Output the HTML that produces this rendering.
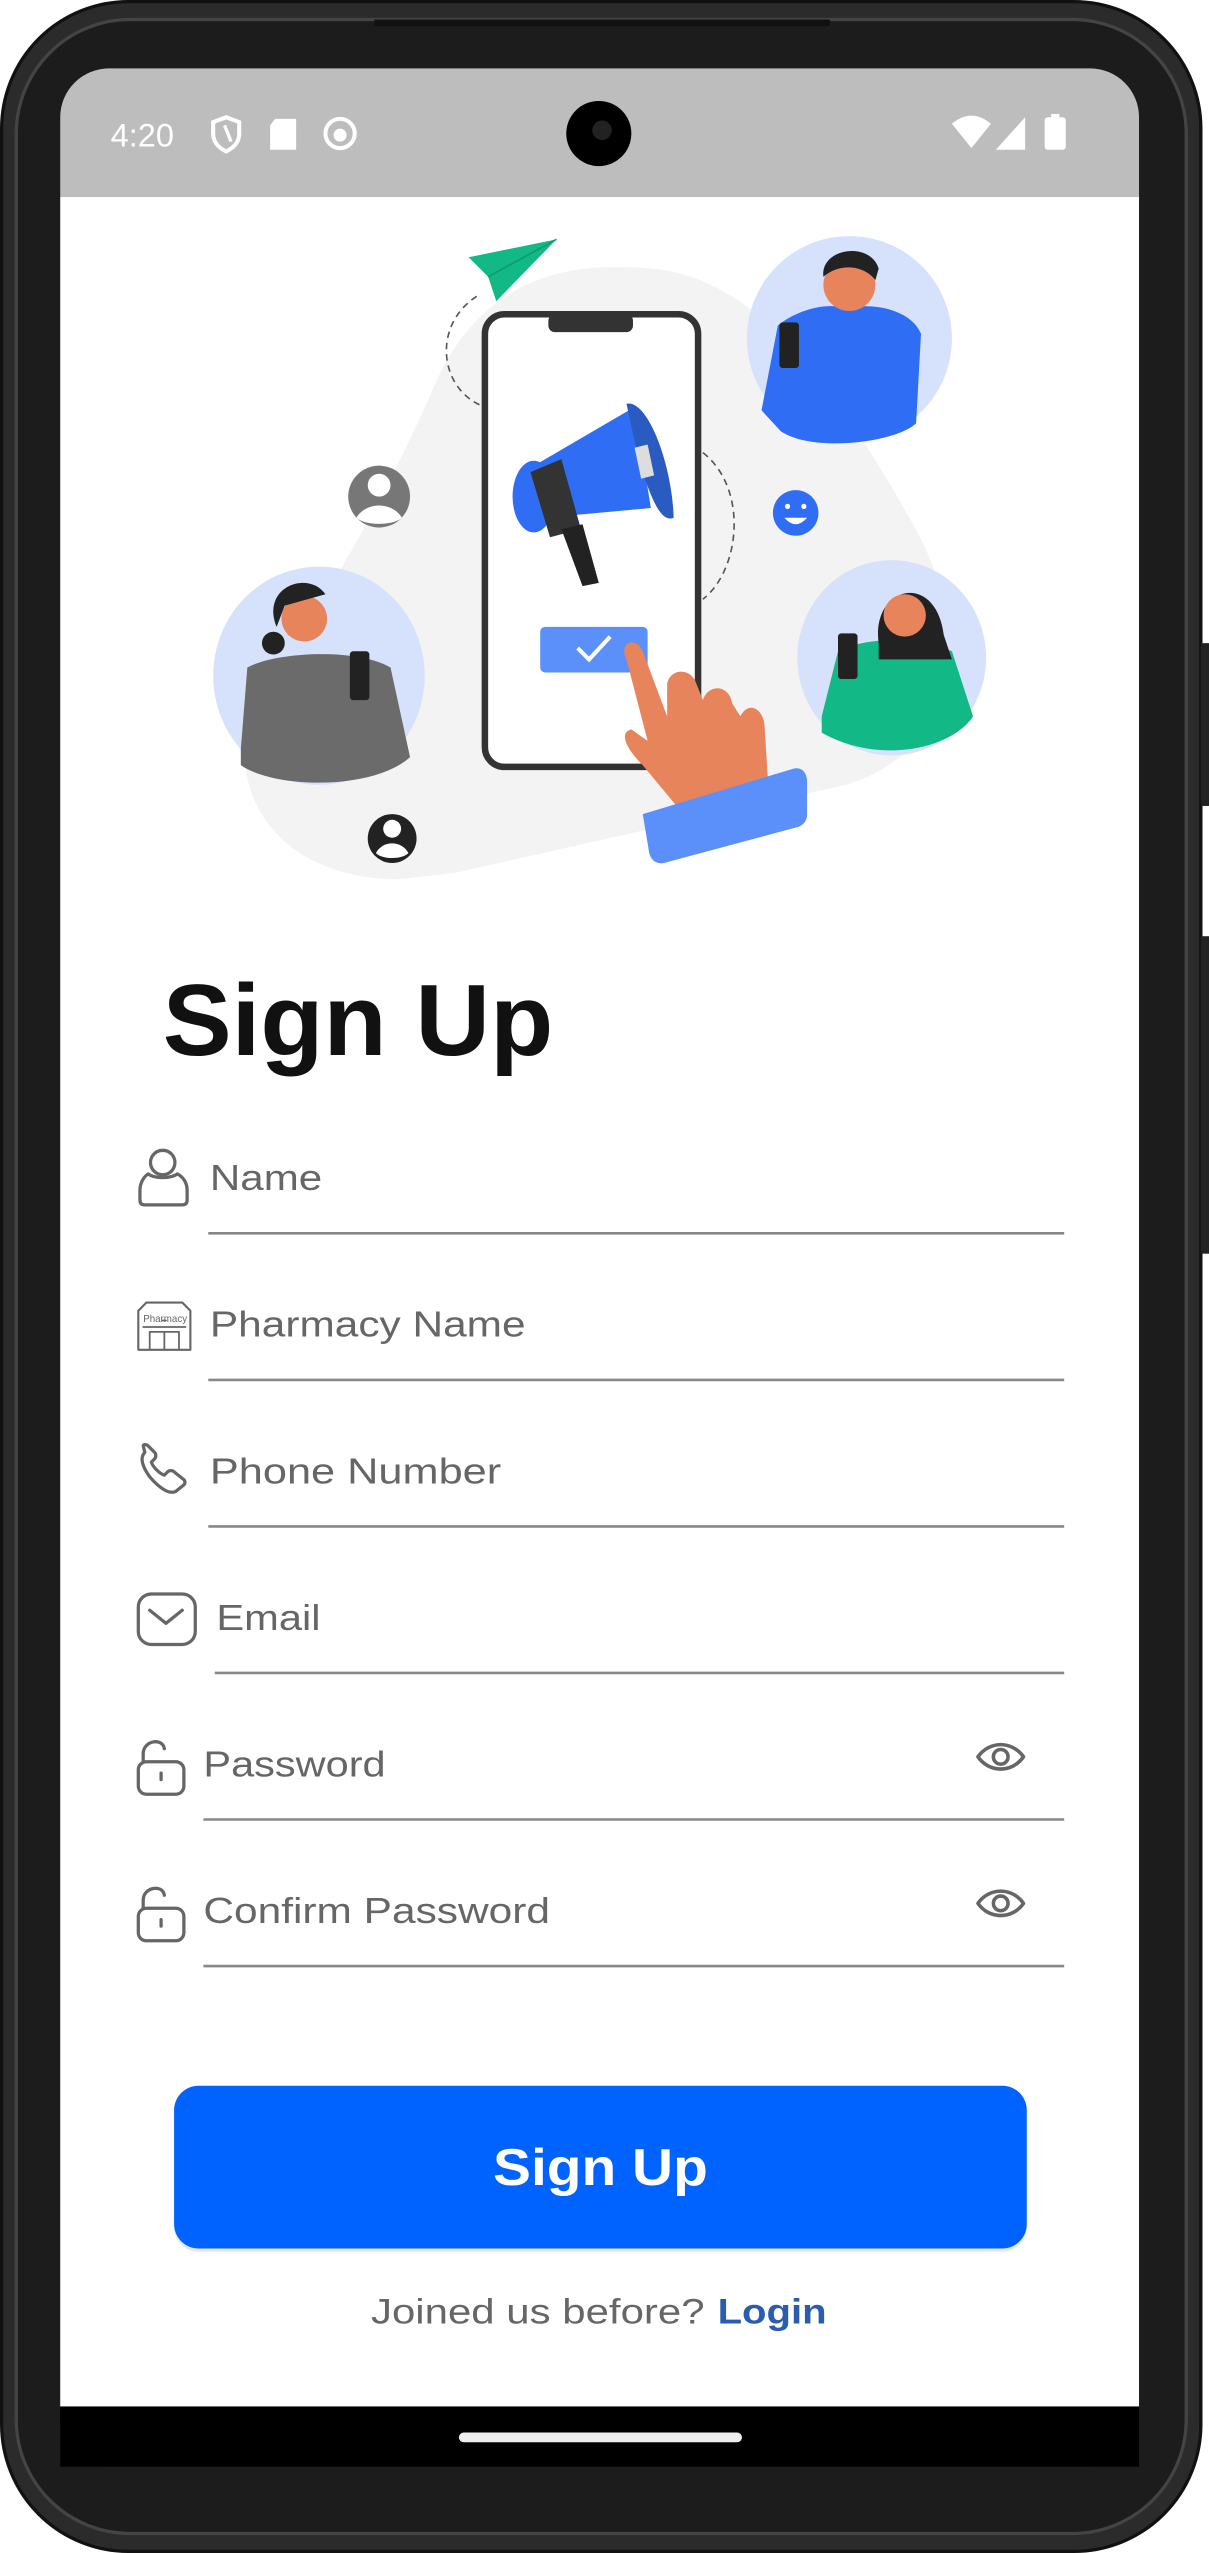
<!DOCTYPE html>
<html><head><meta charset="utf-8"><style>
html,body{margin:0;padding:0;background:#fff;width:1209px;height:2553px;overflow:hidden}
svg{display:block}
text{font-family:"Liberation Sans",sans-serif}
</style></head><body>
<svg width="1209" height="2553" viewBox="0 0 743 1568" preserveAspectRatio="none" xmlns="http://www.w3.org/2000/svg">
<rect x="0" y="0" width="743" height="1568" fill="#fff"/>
<!-- phone body -->
<rect x="1" y="1" width="737" height="1566" rx="78" fill="#2b2b2b" stroke="#111" stroke-width="2"/>
<rect x="10" y="12" width="719" height="1544" rx="70" fill="#1c1c1c" stroke="#444" stroke-width="2"/>
<rect x="738" y="395" width="5" height="100" fill="#222"/>
<rect x="738" y="575" width="5" height="195" fill="#222"/>
<rect x="230" y="12" width="280" height="4" fill="#111"/>
<!-- screen -->
<rect x="37" y="42" width="663" height="1473" rx="30" fill="#000"/>
<path d="M37,121 V72 A30,30 0 0 1 67,42 H670 A30,30 0 0 1 700,72 V121 Z" fill="#bdbdbd"/>
<rect x="37" y="121" width="663" height="1357" fill="#fff"/>
<rect x="37" y="1478" width="663" height="37" fill="#000"/>
<rect x="282" y="1494" width="174" height="6" rx="3" fill="#eee"/>
<!-- status bar -->
<text x="68" y="90" font-size="20" fill="#fff">4:20</text>
<path d="M131,75 L139,72 L147,75 V82 C147,88 143,91 139,93 C135,91 131,88 131,82 Z" fill="none" stroke="#fff" stroke-width="2.5"/>
<path d="M138,77 L142,87" stroke="#fff" stroke-width="2"/>
<path d="M169,73 H182 V92 H166 V77 Z" fill="#fff"/>
<circle cx="209" cy="82" r="9" fill="none" stroke="#fff" stroke-width="2.5"/>
<circle cx="209" cy="83" r="4" fill="#fff"/>
<circle cx="368" cy="82" r="20" fill="#000"/>
<circle cx="370" cy="80" r="6" fill="#222"/>
<path d="M585,76 Q597,66 609,76 L597,91 Z" fill="#fff"/>
<path d="M630,72 V92 H612 Z" fill="#fff"/>
<rect x="642" y="72" width="13" height="20" rx="2" fill="#fff"/>
<rect x="646" y="70" width="5" height="3" fill="#fff"/>
<!-- illustration -->
<path d="M245,540 C160,540 130,470 165,420 C205,360 240,300 270,230 C300,170 350,160 400,165 C470,170 520,250 560,320 C600,390 590,460 520,482 L280,536 Z" fill="#f3f3f3"/>
<path d="M293,182 C265,200 270,240 298,250" fill="none" stroke="#555" stroke-width="1" stroke-dasharray="4,3"/>
<path d="M432,278 C460,300 455,350 432,368" fill="none" stroke="#555" stroke-width="1" stroke-dasharray="4,3"/>
<path d="M288,158 L342,147 L305,185 L300,170 Z" fill="#12b886"/>
<path d="M300,170 L342,147" stroke="#0e9a70" stroke-width="1"/>
<rect x="298" y="193" width="131" height="278" rx="12" fill="#fff" stroke="#333" stroke-width="4"/>
<rect x="337" y="193" width="52" height="11" rx="4" fill="#333"/>
<!-- megaphone -->
<path d="M330,285 L390,250 L400,312 L335,318 Z" fill="#2f6df5"/>
<ellipse cx="328" cy="305" rx="13" ry="22" fill="#2f6df5"/>
<path d="M385,248 C398,245 413,285 414,318 C405,322 398,300 392,280 Z" fill="#2a5bc0"/>
<path d="M326,290 L345,282 L357,325 L338,330 Z" fill="#333"/>
<path d="M345,325 L358,322 L368,358 L358,360 Z" fill="#222"/>
<path d="M390,275 L398,273 L402,292 L394,294 Z" fill="#ddd"/>
<rect x="332" y="385" width="66" height="28" rx="3" fill="#5b8ff9"/>
<path d="M355,398 L362,405 L375,391" fill="none" stroke="#fff" stroke-width="2.5"/>
<!-- hand -->
<path d="M385,405 C380,395 390,390 395,400 L410,440 L410,420 C412,410 425,410 428,420 L432,430 C435,420 448,420 450,432 L455,440 C460,430 470,435 470,448 L472,480 L420,500 L395,470 C385,460 380,450 388,448 L398,455 Z" fill="#e8845c"/>
<path d="M395,500 L488,472 C493,471 496,475 496,480 L496,500 C496,505 493,507 490,508 L408,530 C403,531 400,528 399,524 Z" fill="#5b8ff9"/>
<!-- circles with people -->
<circle cx="522" cy="208" r="63" fill="#d6e2fb"/>
<path d="M468,252 L478,200 C490,190 510,185 520,190 C535,185 560,190 566,205 L563,260 C550,272 500,278 480,265 Z" fill="#2f6df5"/>
<circle cx="522" cy="175" r="16" fill="#e8845c"/>
<path d="M506,170 C504,152 535,148 540,165 L538,172 C530,162 515,162 506,170 Z" fill="#222"/>
<rect x="479" y="198" width="12" height="28" rx="2" fill="#222"/>
<ellipse cx="548" cy="404" rx="58" ry="60" fill="#d6e2fb"/>
<path d="M505,440 L515,400 C530,392 560,390 585,400 L598,440 C585,460 540,470 505,450 Z" fill="#12b886"/>
<path d="M540,395 C535,360 575,350 580,390 L585,405 L540,405 Z" fill="#222"/>
<circle cx="556" cy="378" r="13" fill="#e8845c"/>
<rect x="515" y="389" width="12" height="28" rx="2" fill="#222"/>
<ellipse cx="196" cy="415" rx="65" ry="67" fill="#d6e2fb"/>
<path d="M148,460 L152,410 C170,400 220,398 240,410 L252,465 C230,485 170,485 148,470 Z" fill="#6b6b6b"/>
<circle cx="187" cy="380" r="14" fill="#e8845c"/>
<path d="M170,385 C160,360 190,350 200,365 L175,372 Z" fill="#222"/>
<circle cx="168" cy="395" r="7" fill="#222"/>
<rect x="215" y="400" width="12" height="30" rx="2" fill="#222"/>
<circle cx="233" cy="305" r="19" fill="#777"/>
<circle cx="233" cy="298" r="7" fill="#fff"/>
<path d="M219,318 C225,308 241,308 247,318 C242,323 224,323 219,318 Z" fill="#fff"/>
<circle cx="241" cy="515" r="15" fill="#222"/>
<circle cx="241" cy="509" r="5.5" fill="#fff"/>
<path d="M231,524 C235,516 247,516 251,524 C247,528 235,528 231,524 Z" fill="#fff"/>
<circle cx="489" cy="315" r="14" fill="#2f6df5"/>
<path d="M482,318 Q489,326 496,318 Z" fill="#fff"/>
<circle cx="484" cy="311" r="1.6" fill="#fff"/><circle cx="494" cy="311" r="1.6" fill="#fff"/>
<!-- title -->
<text x="100" y="648" font-size="62" font-weight="bold" fill="#111" textLength="240" lengthAdjust="spacingAndGlyphs">Sign Up</text>
<!-- fields -->
<g font-size="22" fill="#666">
<text x="129" y="731" textLength="69" lengthAdjust="spacingAndGlyphs">Name</text>
<text x="129" y="821" textLength="194" lengthAdjust="spacingAndGlyphs">Pharmacy Name</text>
<text x="129" y="911" textLength="179" lengthAdjust="spacingAndGlyphs">Phone Number</text>
<text x="133" y="1001" textLength="64" lengthAdjust="spacingAndGlyphs">Email</text>
<text x="125" y="1091" textLength="112" lengthAdjust="spacingAndGlyphs">Password</text>
<text x="125" y="1181" textLength="213" lengthAdjust="spacingAndGlyphs">Confirm Password</text>
</g>
<g stroke="#888" stroke-width="1.6">
<line x1="128" y1="757.5" x2="654" y2="757.5"/>
<line x1="128" y1="847.5" x2="654" y2="847.5"/>
<line x1="128" y1="937.5" x2="654" y2="937.5"/>
<line x1="132" y1="1027.5" x2="654" y2="1027.5"/>
<line x1="125" y1="1117.5" x2="654" y2="1117.5"/>
<line x1="125" y1="1207.5" x2="654" y2="1207.5"/>
</g>
<g fill="none" stroke="#666" stroke-width="2" stroke-linecap="round" stroke-linejoin="round">
<circle cx="100" cy="714" r="7.5"/>
<path d="M91,721 C95,724 105,724 109,721 C113,723 115,727 115,731 V737 C115,739 114,740 112,740 H89 C87,740 86,739 86,737 V731 C86,727 88,723 91,721 Z"/>
<path d="M85,805 L90,800 H112 L117,805 V829 H85 Z" stroke-width="1.3"/>
<path d="M88,815 H114 M92,829 V818 H110 V829 M101,818 V829 M100,811 H102" stroke-width="1.1"/>
<text x="88" y="812" font-size="6" fill="#666" stroke="none">Pharmacy</text>
<path d="M89,892 C86,895 87,900 92,907 C98,914 104,918 108,916 L113,912 C114,911 114,909 112,908 L107,904 C106,903 104,903 103,904 L101,906 C98,905 94,901 93,898 L95,896 C96,895 96,893 95,892 L91,888 C90,887 88,887 88,888 Z"/>
<rect x="85" y="979" width="35" height="31" rx="8"/>
<path d="M92,989 L102,997 L112,989"/>
<path d="M88,1082 V1077 C88,1069 100,1067 101,1074" />
<rect x="85" y="1082" width="28" height="20" rx="5"/>
<line x1="99" y1="1089" x2="99" y2="1093"/>
<path d="M88,1172 V1167 C88,1159 100,1157 101,1164" />
<rect x="85" y="1172" width="28" height="20" rx="5"/>
<line x1="99" y1="1179" x2="99" y2="1183"/>
<path d="M601,1079 C608,1069 622,1069 629,1079 C622,1089 608,1089 601,1079 Z" stroke-width="2.2"/>
<circle cx="615" cy="1079" r="4.5" stroke-width="2.2"/>
<path d="M601,1169 C608,1159 622,1159 629,1169 C622,1179 608,1179 601,1169 Z" stroke-width="2.2"/>
<circle cx="615" cy="1169" r="4.5" stroke-width="2.2"/>
</g>
<!-- button -->
<rect x="107" y="1283" width="524" height="100" rx="15" fill="#d9d9d9" opacity="0.6"/>
<rect x="107" y="1281" width="524" height="100" rx="15" fill="#0062ff"/>
<text x="303" y="1342" font-size="32" font-weight="bold" fill="#fff" textLength="132" lengthAdjust="spacingAndGlyphs">Sign Up</text>
<text x="228" y="1427" font-size="21.5" fill="#666" textLength="205" lengthAdjust="spacingAndGlyphs">Joined us before?</text>
<text x="441" y="1427" font-size="21.5" font-weight="bold" fill="#2a5db0" textLength="67" lengthAdjust="spacingAndGlyphs">Login</text>
</svg>
</body></html>
